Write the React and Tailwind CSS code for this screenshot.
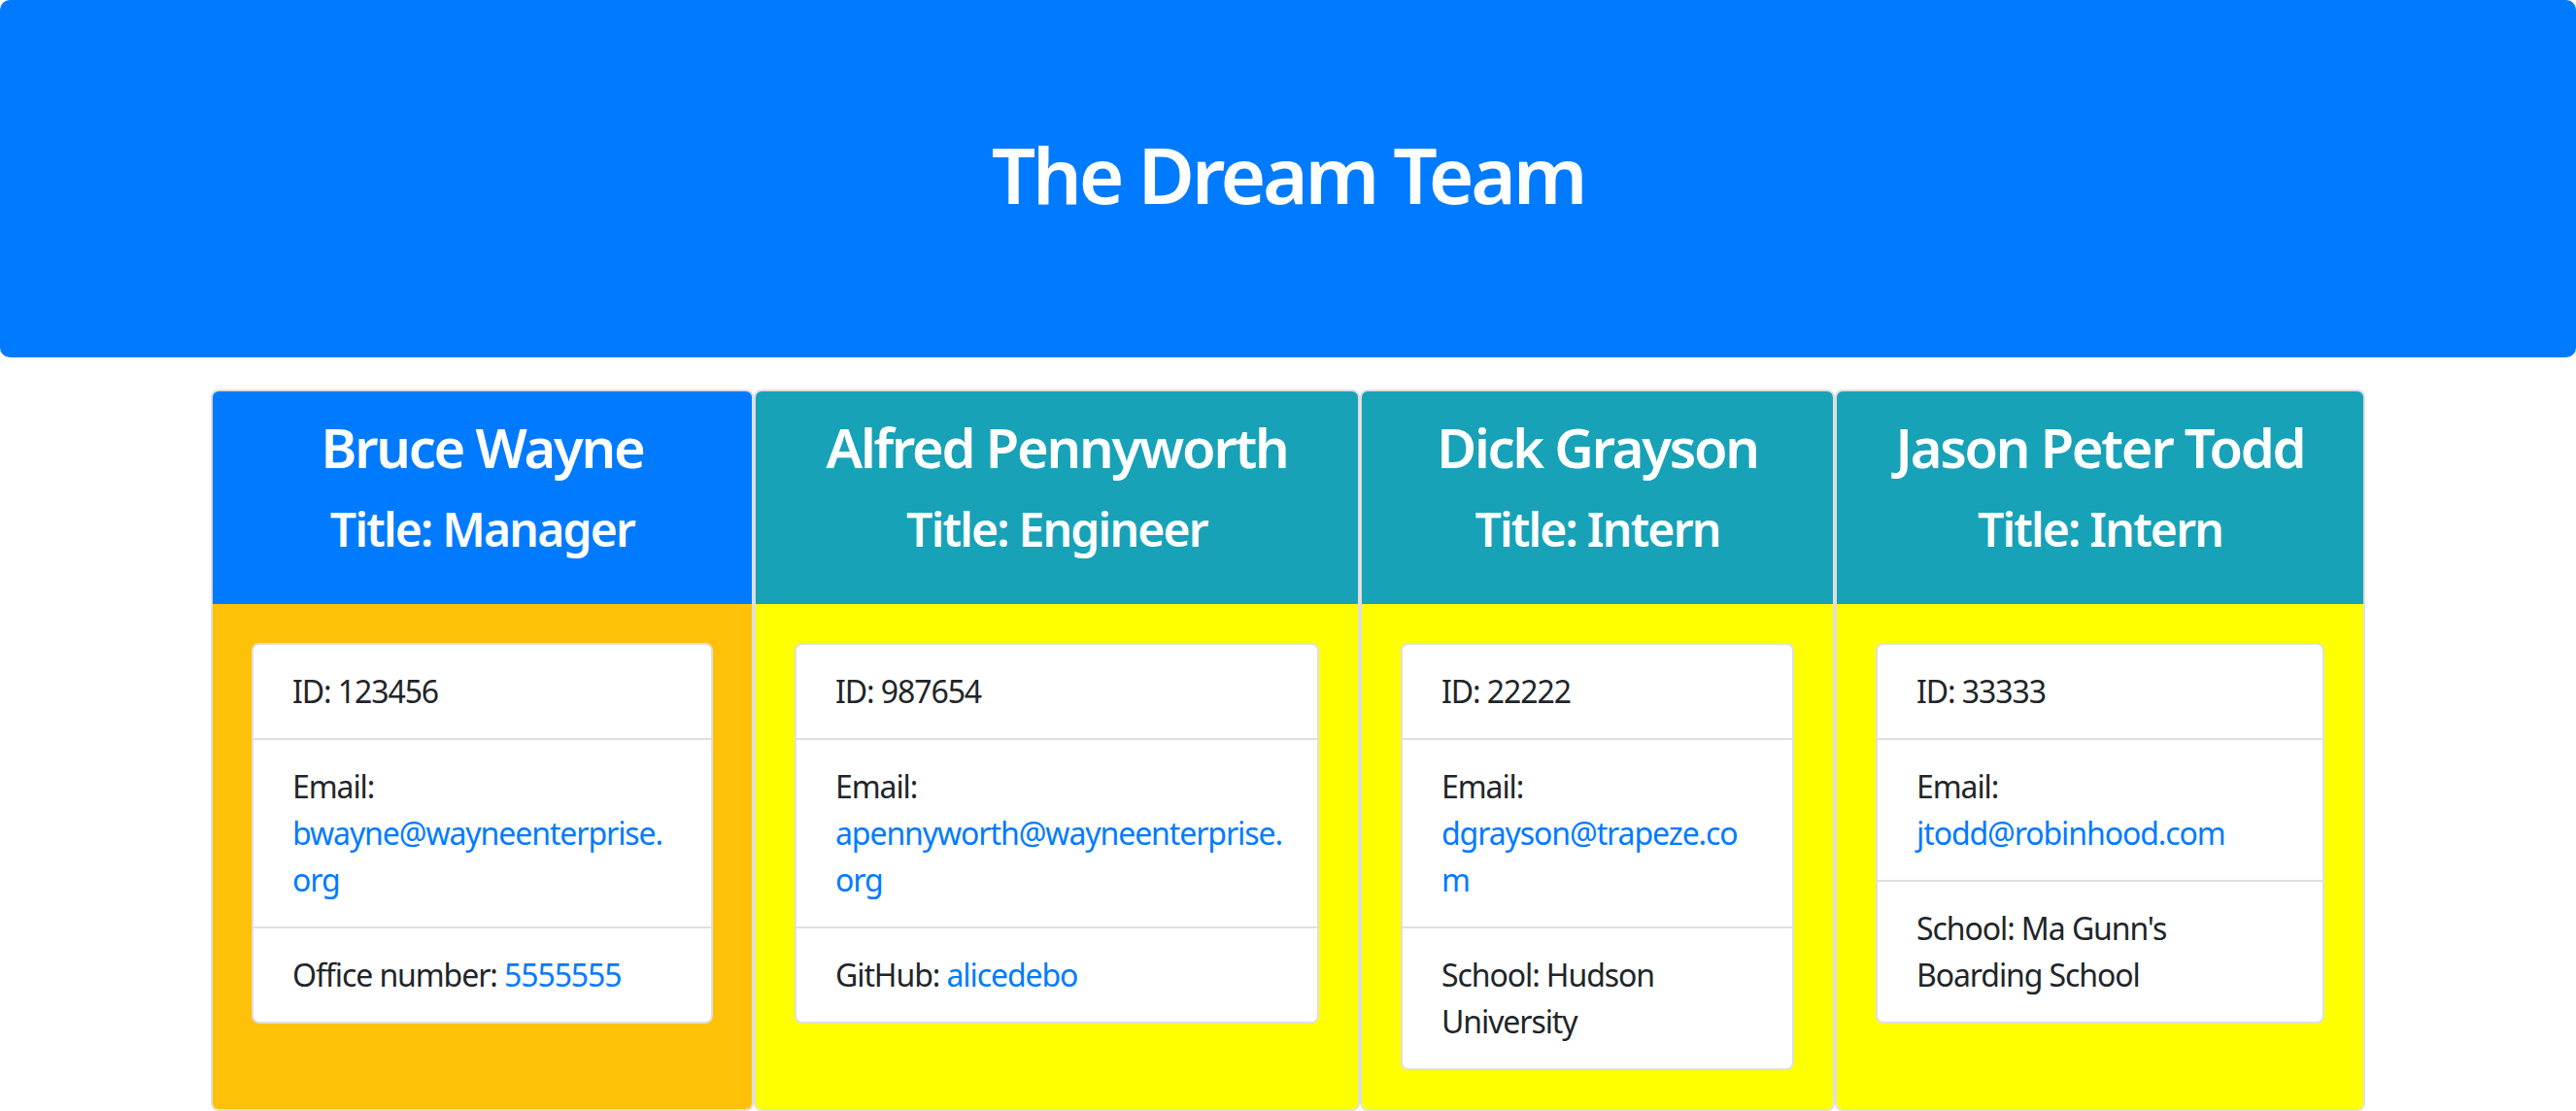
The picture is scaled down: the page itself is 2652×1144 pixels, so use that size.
import React from "react";

const cards = [
  {
    name: "Bruce Wayne",
    title: "Manager",
    head: "bg-[#007bff]",
    body: "bg-[#ffc107]",
    w: "w-[559px]",
    id: "123456",
    email: ["bwayne@wayneenterprise.", "org"],
    extra: { label: "Office number: ", link: "5555555" },
  },
  {
    name: "Alfred Pennyworth",
    title: "Engineer",
    head: "bg-[#17a2b8]",
    body: "bg-[#ffff00]",
    w: "w-[624px]",
    id: "987654",
    email: ["apennyworth@wayneenterprise.", "org"],
    extra: { label: "GitHub: ", link: "alicedebo" },
  },
  {
    name: "Dick Grayson",
    title: "Intern",
    head: "bg-[#17a2b8]",
    body: "bg-[#ffff00]",
    w: "w-[489px]",
    id: "22222",
    email: ["dgrayson@trapeze.co", "m"],
    extra: { lines: ["School: Hudson", "University"] },
  },
  {
    name: "Jason Peter Todd",
    title: "Intern",
    head: "bg-[#17a2b8]",
    body: "bg-[#ffff00]",
    w: "w-[546px]",
    id: "33333",
    email: ["jtodd@robinhood.com"],
    extra: { lines: ["School: Ma Gunn's", "Boarding School"] },
  },
];

const font = { fontFamily: '"Noto Sans", "Open Sans", sans-serif' };

function Card({ c }) {
  return (
    <div className={`${c.w} flex flex-col border-2 border-[#dfdfdf] rounded-lg overflow-hidden`}>
      <div className={`${c.head} text-white text-center pt-[24px] pb-[48px] px-[40px]`}>
        <h3 className="text-[56px] leading-[67px] font-semibold tracking-[-0.04em] mb-[22px] whitespace-nowrap">{c.name}</h3>
        <h4 className="text-[48px] leading-[58px] font-semibold tracking-[-0.037em] whitespace-nowrap">Title: {c.title}</h4>
      </div>
      <div className={`${c.body} flex-1 p-[40px]`}>
        <ul className="bg-white border-2 border-[#dfdfdf] rounded-lg text-[32px] leading-[48px] tracking-[-0.034em] text-[#212529]">
          <li className="px-[40px] py-[24px] whitespace-nowrap">ID: {c.id}</li>
          <li className="px-[40px] py-[24px] border-t-2 border-[#dfdfdf] whitespace-nowrap">
            Email:
            <br />
            <a className="text-[#007bff]" href="#">
              {c.email.map((l, i) => (
                <React.Fragment key={i}>
                  {i > 0 && <br />}
                  {l}
                </React.Fragment>
              ))}
            </a>
          </li>
          <li className="px-[40px] py-[24px] border-t-2 border-[#dfdfdf] whitespace-nowrap">
            {c.extra.lines ? (
              c.extra.lines.map((l, i) => (
                <React.Fragment key={i}>
                  {i > 0 && <br />}
                  {l}
                </React.Fragment>
              ))
            ) : (
              <>
                {c.extra.label}
                <a className="text-[#007bff]" href="#">{c.extra.link}</a>
              </>
            )}
          </li>
        </ul>
      </div>
    </div>
  );
}

export default function App() {
  return (
    <div className="w-[2652px] bg-white" style={font}>
      <div className="h-[368px] bg-[#007bff] rounded-[10px] pt-[131px] text-center">
        <h1 className="text-white text-[80px] leading-[96px] font-semibold tracking-[-0.042em]">The Dream Team</h1>
      </div>
      <div className="flex justify-center mt-[33px]">
        {cards.map((c) => (
          <Card key={c.name} c={c} />
        ))}
      </div>
    </div>
  );
}
